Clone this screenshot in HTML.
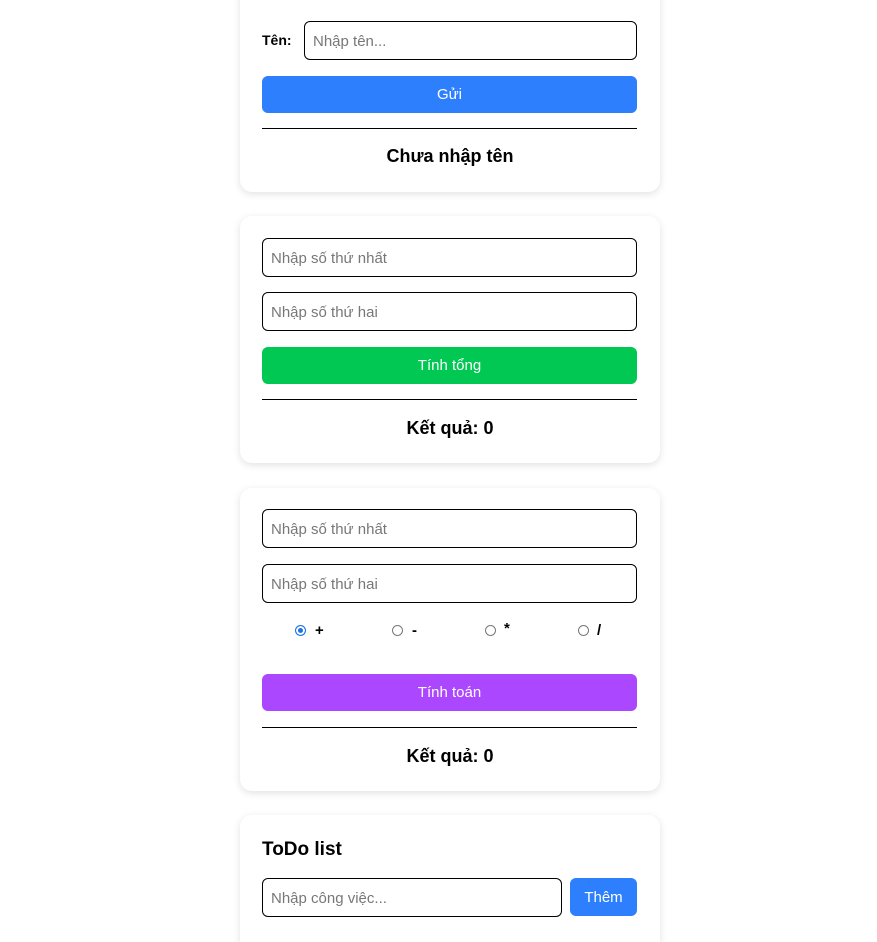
<!DOCTYPE html>
<html><head><meta charset="utf-8"><style>
html,body{margin:0;background:#fff;width:877px;height:942px;overflow:hidden;}
body{position:relative;font-family:"Segoe UI","Liberation Sans","Noto Sans CJK SC",sans-serif;}
.card{position:absolute;left:240px;width:420px;background:#fff;border-radius:12px;box-shadow:0 2px 8px rgba(0,0,0,.12);}
.a{position:absolute;box-sizing:border-box;}
.in{border:1px solid #000;border-radius:6px;height:39px;font-size:15px;color:#777;padding-left:8px;line-height:39px;}
.btn{border-radius:6px;height:37px;color:#fff;font-size:15px;text-align:center;line-height:38px;}
.hr{height:1px;background:#000;left:22px;width:375px;}
.res{left:0;width:420px;text-align:center;font-weight:bold;font-size:18px;color:#000;}
.rad{width:11px;height:11px;border:1px solid #777;border-radius:50%;}
.lab{font-size:15px;font-weight:bold;}
</style></head><body>
<div class="card" style="top:-20px;height:212px">
<div class="a" style="left:22px;top:52px;font-size:14px;font-weight:bold">Tên:</div>
<div class="a in" style="left:64px;top:41px;width:333px">Nhập tên...</div>
<div class="a btn" style="left:22px;top:96px;width:375px;background:#2d7ffe">Gửi</div>
<div class="a hr" style="top:148px"></div>
<div class="a res" style="top:166px">Chưa nhập tên</div>
</div>
<div class="card" style="top:216px;height:247px">
<div class="a in" style="left:22px;top:22px;width:375px">Nhập số thứ nhất</div>
<div class="a in" style="left:22px;top:76px;width:375px">Nhập số thứ hai</div>
<div class="a btn" style="left:22px;top:131px;width:375px;background:#00c853">Tính tổng</div>
<div class="a hr" style="top:183px"></div>
<div class="a res" style="top:202px">Kết quả: 0</div>
</div>
<div class="card" style="top:488px;height:303px">
<div class="a in" style="left:22px;top:21px;width:375px">Nhập số thứ nhất</div>
<div class="a in" style="left:22px;top:76px;width:375px">Nhập số thứ hai</div>
<div class="a rad" style="left:55px;top:137px;border-color:#1a73e8;box-shadow:inset 0 0 0 2px #fff;background:#1a73e8"></div>
<div class="a lab" style="left:75px;top:134px">+</div>
<div class="a rad" style="left:152px;top:137px"></div>
<div class="a lab" style="left:172px;top:134px">-</div>
<div class="a rad" style="left:245px;top:137px"></div>
<div class="a lab" style="left:264px;top:132px">*</div>
<div class="a rad" style="left:338px;top:137px"></div>
<div class="a lab" style="left:357px;top:134px">/</div>
<div class="a btn" style="left:22px;top:186px;width:375px;background:#ab47ff">Tính toán</div>
<div class="a hr" style="top:239px"></div>
<div class="a res" style="top:258px">Kết quả: 0</div>
</div>
<div class="card" style="top:815px;height:127px;border-radius:12px 12px 0 0">
<div class="a" style="left:22px;top:24px;font-size:19px;font-weight:bold">ToDo list</div>
<div class="a in" style="left:22px;top:63px;width:300px">Nhập công việc...</div>
<div class="a btn" style="left:330px;top:63px;width:67px;height:38px;line-height:39px;background:#2d7ffe">Thêm</div>
</div>
</body></html>
